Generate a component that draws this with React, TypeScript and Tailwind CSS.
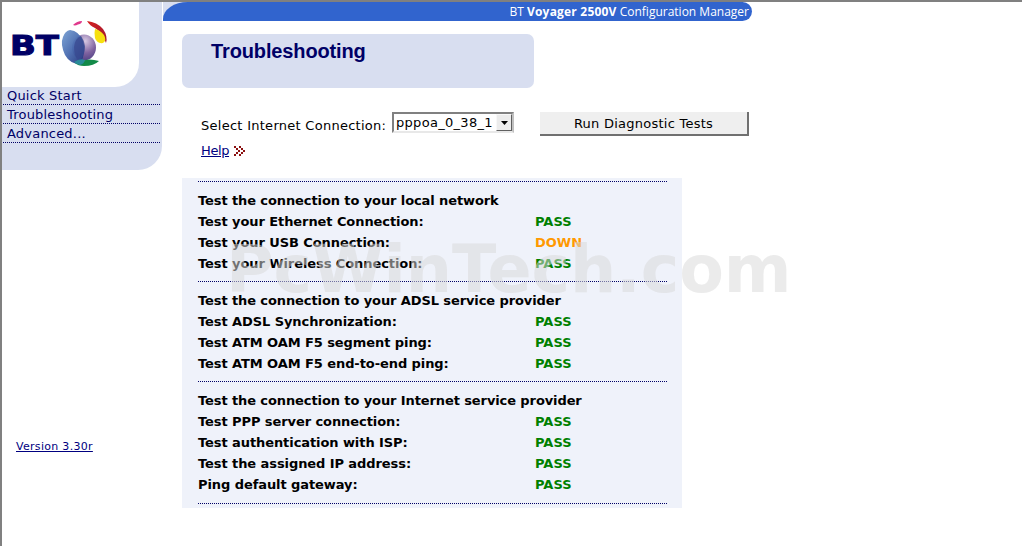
const font = "[font-family:'DejaVu_Sans',Verdana,sans-serif]";

const sections = [
  {
    title: "Test the connection to your local network",
    rows: [
      ["Test your Ethernet Connection:", "PASS"],
      ["Test your USB Connection:", "DOWN"],
      ["Test your Wireless Connection:", "PASS"],
    ],
  },
  {
    title: "Test the connection to your ADSL service provider",
    rows: [
      ["Test ADSL Synchronization:", "PASS"],
      ["Test ATM OAM F5 segment ping:", "PASS"],
      ["Test ATM OAM F5 end-to-end ping:", "PASS"],
    ],
  },
  {
    title: "Test the connection to your Internet service provider",
    rows: [
      ["Test PPP server connection:", "PASS"],
      ["Test authentication with ISP:", "PASS"],
      ["Test the assigned IP address:", "PASS"],
      ["Ping default gateway:", "PASS"],
    ],
  },
];

const chevronCells = [
  [0, 0], [2, 2], [4, 4], [2, 6], [0, 8],
  [5, 0], [7, 2], [9, 4], [7, 6], [5, 8],
];

function Logo() {
  return (
    <svg width="110" height="60" viewBox="2 19 110 60" className="block">
      <defs>
        <linearGradient id="blue" x1="0" y1="0" x2="1" y2="1">
          <stop offset="0" stopColor="#7aa2d4" />
          <stop offset="0.5" stopColor="#4a6cb0" />
          <stop offset="1" stopColor="#1f2f78" />
        </linearGradient>
        <radialGradient id="purple" cx="0.55" cy="0.25" r="0.85">
          <stop offset="0" stopColor="#d6c8e2" />
          <stop offset="0.55" stopColor="#7f629f" />
          <stop offset="1" stopColor="#463a80" />
        </radialGradient>
        <linearGradient id="red" x1="0" y1="0" x2="1" y2="1">
          <stop offset="0" stopColor="#d42020" />
          <stop offset="1" stopColor="#a01830" />
        </linearGradient>
      </defs>
      <text x="10" y="55" fontFamily="'DejaVu Sans',sans-serif" fontWeight="900" fontSize="26" fill="#000066" textLength="49" lengthAdjust="spacingAndGlyphs" stroke="#000066" strokeWidth="1">BT</text>
      <path d="M73 25 Q77 21 82 21 Q82 23.500 78 24.500 Q75 26 73 25Z" fill="#e0388c" />
      <path d="M87 21 Q97 22 103 29 Q108 36 106 43 Q103 33 95 28 Q90 26 87 21Z" fill="url(#red)" />
      <path d="M95 29 Q100 30 104 35 Q107 40 103 43 Q97 44 95 38 Q94 33 95 29Z" fill="#f7e010" />
      <ellipse cx="84" cy="47.500" rx="12" ry="13" fill="url(#purple)" />
      <path d="M70 30 Q79 31 83 41 Q87 52 80 64 Q70 64 65 55 Q60 44 63 37 Q65 31 70 30Z" fill="url(#blue)" opacity="0.96" />
      <path d="M81 36 Q75 38 74 47 Q74 56 79 62 Q85 54 85 46 Q84 40 81 36Z" fill="#3a4a90" opacity="0.75" />
      <path d="M75 63 Q87 57 99 61 Q94 66 84 66 Q78 66 75 63Z" fill="#128a48" />
      <path d="M74 62 Q80 58 85 60 Q84 64 80 65 Q76 64 74 62Z" fill="#2a8a9a" />
    </svg>
  );
}

function Section({ title, rows, last }: { title: string; rows: string[][]; last?: boolean }) {
  return (
    <div className={`flex flex-col border-b border-dotted border-[#000066] pt-[9px] ${last ? "pb-[7px]" : "pb-[6px]"}`}>
      <div className="flex h-[21px] items-center tracking-[-0.1px]">{title}</div>
      {rows.map(([label, status]) => (
        <div key={label} className="flex h-[21px] items-center">
          <span className="w-[337px] tracking-[-0.08px]">{label}</span>
          <span className={status === "PASS" ? "text-[#008000]" : "text-[#ff9900]"}>{status}</span>
        </div>
      ))}
    </div>
  );
}

export default function App() {
  return (
    <div className={`${font} relative flex h-[546px] w-[1022px] overflow-hidden border-l-2 border-t-2 border-[#808080] bg-white text-[13px] text-black`}>
      <aside className="flex w-[160px] shrink-0 flex-col">
        <div className="rounded-br-[24px] bg-[#d8def0]">
          <div className="flex h-[85px] w-[137px] items-start rounded-br-[24px] bg-white pt-[17px]">
            <Logo />
          </div>
          <nav className="mt-px flex h-[82px] flex-col pl-px pr-[2px] tracking-[0.2px] text-[#000066]">
            {["Quick Start", "Troubleshooting", "Advanced..."].map((item) => (
              <div key={item} className="flex h-[19px] items-center border-b border-dotted border-[#000066] pl-[4px] pt-px first:h-[17px] first:pt-0">
                {item}
              </div>
            ))}
          </nav>
        </div>
        <a className="ml-[14px] mt-[269px] text-[11px] tracking-[0.3px] text-[#000080] underline">Version 3.30r</a>
      </aside>

      <main className="flex min-w-0 flex-1 flex-col pl-px">
        <div className="w-[589px] bg-[linear-gradient(to_right,#d8def0_30px,transparent_30px)]">
          <header className="flex h-[19px] items-center justify-end rounded-r-[10px] rounded-tl-[26px_18px] bg-[#3164ce] pr-[3px] text-[12px] text-white [font-family:'Open_Sans','DejaVu_Sans',sans-serif]">
            <span>
              BT <b className="font-bold tracking-[0.2px]">Voyager 2500V</b> Configuration Manager
            </span>
          </header>
        </div>

        <div className="ml-[19px] mt-[13px] h-[54px] w-[352px] rounded-[7px] bg-[#d8def0] pl-[29px] pt-[4px] text-[20px] font-bold leading-[26px] tracking-[-0.13px] text-[#000066] [font-family:'Liberation_Sans',Arial,sans-serif]">
          Troubleshooting
        </div>

        <div className="ml-[38px] mt-[24px] flex items-start">
          <span className="mt-[4px] w-[191px] whitespace-nowrap tracking-[0.27px]">Select Internet Connection:</span>
          <div className="flex h-[21px] w-[122px] items-center justify-between border-2 border-b-[#e8e8e8] border-l-[#808080] border-r-[#c0c0c0] border-t-[#808080] bg-white pl-[2px] tracking-[0.3px]">
            <span className="pt-px">pppoa_0_38_1</span>
            <span className="flex h-[17px] w-[16px] items-center justify-center border border-b-[#606060] border-l-[#f8f8f8] border-r-[#606060] border-t-[#f8f8f8] bg-[#ececec]">
              <svg width="7" height="4" viewBox="0 0 7 4"><path d="M0 0H7L3.500 4Z" fill="#000" /></svg>
            </span>
          </div>
          <button className="ml-[26px] h-[24px] w-[209px] border-b-2 border-r-2 border-b-[#707070] border-r-[#707070] bg-[#efefef] pt-[2px] text-center text-[13px] tracking-[0.25px]">
            Run Diagnostic Tests
          </button>
        </div>

        <div className="ml-[38px] mt-[5px] flex items-center gap-[5px]">
          <a className="tracking-[-0.4px] text-[#000080] underline">Help</a>
          <svg width="11" height="10" viewBox="0 0 11 10" shapeRendering="crispEdges">
            {chevronCells.map(([x, y]) => (
              <rect key={`${x}-${y}`} x={x} y={y} width="2" height="2" fill="#8b1010" />
            ))}
          </svg>
        </div>

        <section className="ml-[19px] mt-[17px] flex w-[500px] flex-col bg-[#eff2fa] pb-[4px] pl-[16px] pr-[15px] pt-[3px] font-bold">
          <div className="border-t border-dotted border-[#000066]">
            {sections.map((s, i) => (
              <Section key={s.title} title={s.title} rows={s.rows} last={i === sections.length - 1} />
            ))}
          </div>
        </section>
      </main>

      <div className="pointer-events-none absolute left-[224px] top-[228px] whitespace-nowrap text-[65px] font-bold leading-[80px] tracking-[-0.1px] text-[#d9d9d985]">
        PcWinTech.com
      </div>
    </div>
  );
}
